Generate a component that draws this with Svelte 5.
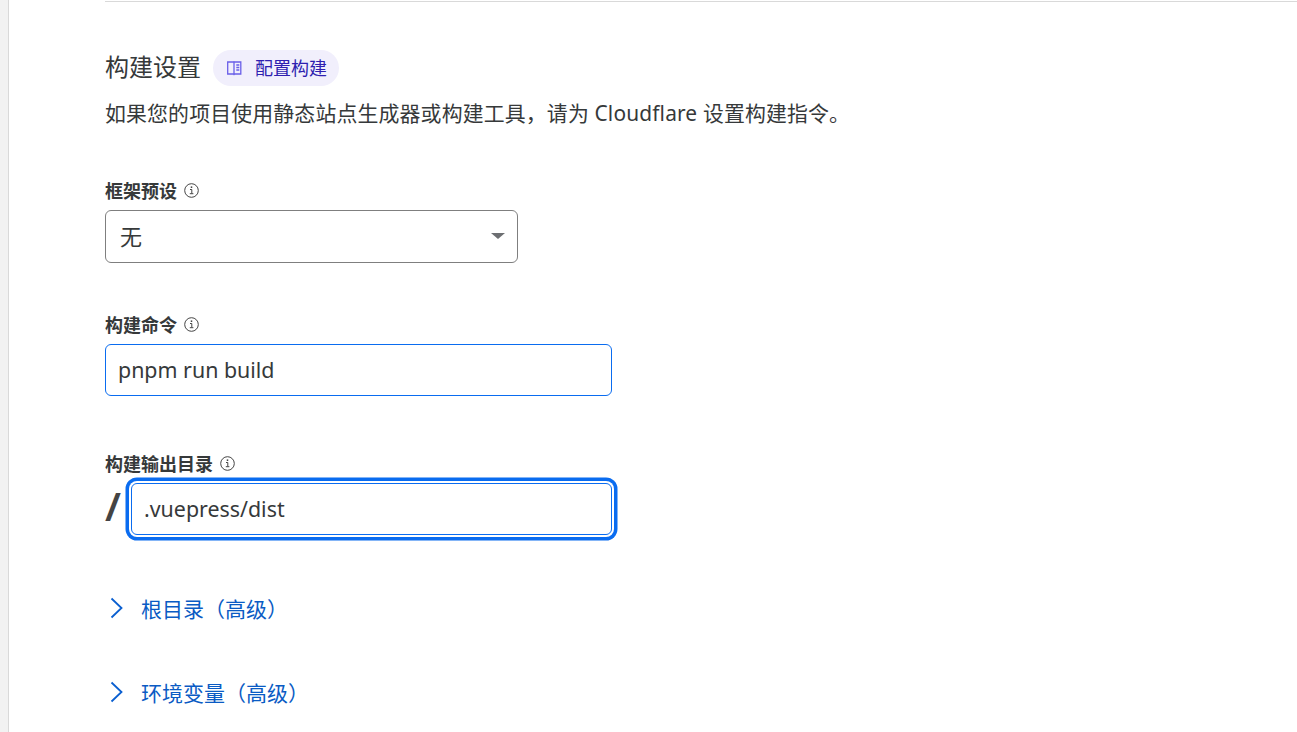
<script lang="ts">
  const links = ['根目录（高级）', '环境变量（高级）'];
</script>

<div class="page">
  <div class="rail"></div>
  <main class="content">
    <hr class="rule" />

    <div class="heading">
      <h2>构建设置</h2>
      <a class="pill" href="#docs">
        <svg width="16" height="16" viewBox="0 0 16 16" fill="none" stroke="#6a5fe8" stroke-width="1.300">
          <path d="M1.700 2H7.500L8 2.500 8.500 2H14.800V14H8.500L8 14.500 7.500 14H1.700ZM8 2.500V14.500" />
          <path d="M10.300 5h3M10.300 7.500h3M10.300 10h3" />
        </svg>
        <span>配置构建</span>
      </a>
    </div>
    <p class="desc">如果您的项目使用静态站点生成器或构建工具，请为 Cloudflare 设置构建指令。</p>

    <div class="field first">
      <div class="label">框架预设 {@render info()}</div>
      <div class="select">
        <span>无</span>
        <i class="caret"></i>
      </div>
    </div>

    <div class="field second">
      <div class="label">构建命令 {@render info()}</div>
      <input class="input wide" value="pnpm run build" />
    </div>

    <div class="field third">
      <div class="label">构建输出目录 {@render info()}</div>
      <div class="prefixed">
        <span class="slash">/</span>
        <input class="input focused" value=".vuepress/dist" />
      </div>
    </div>

    <div class="links">
      {#each links as link}
        <a class="toggle" href="#adv">
          <svg width="16" height="22" viewBox="0 0 16 22" fill="none" stroke="#0a5fd0" stroke-width="1.800">
            <path d="M3.500 1.500 13.500 11 3.500 20.500" />
          </svg>
          <span>{link}</span>
        </a>
      {/each}
    </div>
  </main>
</div>

{#snippet info()}
  <svg class="info" width="15" height="15" viewBox="0 0 15 15" fill="none" stroke="#444" stroke-width="1">
    <circle cx="7.500" cy="7.500" r="6.800" />
    <path d="M6 6.500h1.800v4M5.800 10.700h3.600" />
    <path d="M7.500 3.400v1.600" stroke-width="1.500" />
  </svg>
{/snippet}

<style>
  :global(body) {
    margin: 0;
    background: #fff;
    overflow: hidden;
  }

  .page {
    display: flex;
    height: 732px;
    overflow: hidden;
    color: #36393a;
    font-family: "Noto Sans", "Noto Sans CJK SC", sans-serif;
  }

  .rail {
    width: 8px;
    flex-shrink: 0;
    background: #f2f2f2;
    border-right: 1px solid #d9d9d9;
  }

  .content {
    flex: 1;
    padding-left: 96px;
  }

  .rule {
    margin: 1px 0 0;
    border: 0;
    border-top: 1px solid #d9d9d9;
  }

  .heading {
    display: flex;
    align-items: center;
    gap: 12px;
    margin-top: 48px;
    height: 36px;
  }

  h2 {
    margin: 0 0 3px;
    font-size: 24px;
    font-weight: 400;
    line-height: 33px;
  }

  .pill {
    display: flex;
    align-items: center;
    gap: 13px;
    height: 36px;
    padding: 0 12px 0 13px;
    border-radius: 18px;
    background: #f1effc;
    color: #2f1fb0;
    font-size: 18px;
    text-decoration: none;
  }

  .pill span {
    margin-bottom: 2px;
  }

  .desc {
    margin: 9px 0 0;
    font-size: 20.900px;
    letter-spacing: 0.150px;
    line-height: 36px;
  }

  .field.first { margin-top: 46px; }
  .field.second { margin-top: 48px; }
  .field.third { margin-top: 54px; }

  .label {
    display: flex;
    align-items: center;
    gap: 7px;
    box-sizing: border-box;
    height: 28px;
    padding-bottom: 2px;
    font-size: 18px;
    font-weight: 700;
  }

  .select {
    display: flex;
    align-items: center;
    justify-content: space-between;
    box-sizing: border-box;
    width: 413px;
    height: 53px;
    margin-top: 5px;
    padding: 0 12px 3px 14px;
    border: 1px solid #7f7f7f;
    border-radius: 6px;
    font-size: 22px;
  }

  .caret {
    width: 0;
    height: 0;
    margin-top: 2px;
    border-left: 7px solid transparent;
    border-right: 7px solid transparent;
    border-top: 6px solid #6d6f72;
  }

  .input {
    display: block;
    box-sizing: border-box;
    height: 52px;
    padding: 0 12px 2px;
    border: 1px solid #0a6cf0;
    border-radius: 6px;
    outline: none;
    background: #fff;
    color: #36393a;
    font: inherit;
    font-size: 21.400px;
  }

  .input.wide {
    width: 507px;
    margin-top: 5px;
  }

  .prefixed {
    display: flex;
    align-items: center;
    gap: 13px;
    margin-top: 5px;
    height: 52px;
  }

  .slash {
    width: 13px;
    margin-bottom: 6px;
    color: #444;
    font-size: 40px;
    font-weight: 600;
    line-height: 52px;
    text-align: center;
  }

  .input.focused {
    width: 481px;
    box-shadow: 0 0 0 2px #fff, 0 0 0 5.500px #0a6cf0;
  }

  .links {
    display: flex;
    flex-direction: column;
    gap: 52px;
    margin-top: 57px;
  }

  .toggle {
    display: flex;
    align-items: center;
    gap: 17px;
    height: 32px;
    padding-left: 3px;
    color: #0a5bc4;
    font-size: 21px;
    text-decoration: none;
  }
</style>
